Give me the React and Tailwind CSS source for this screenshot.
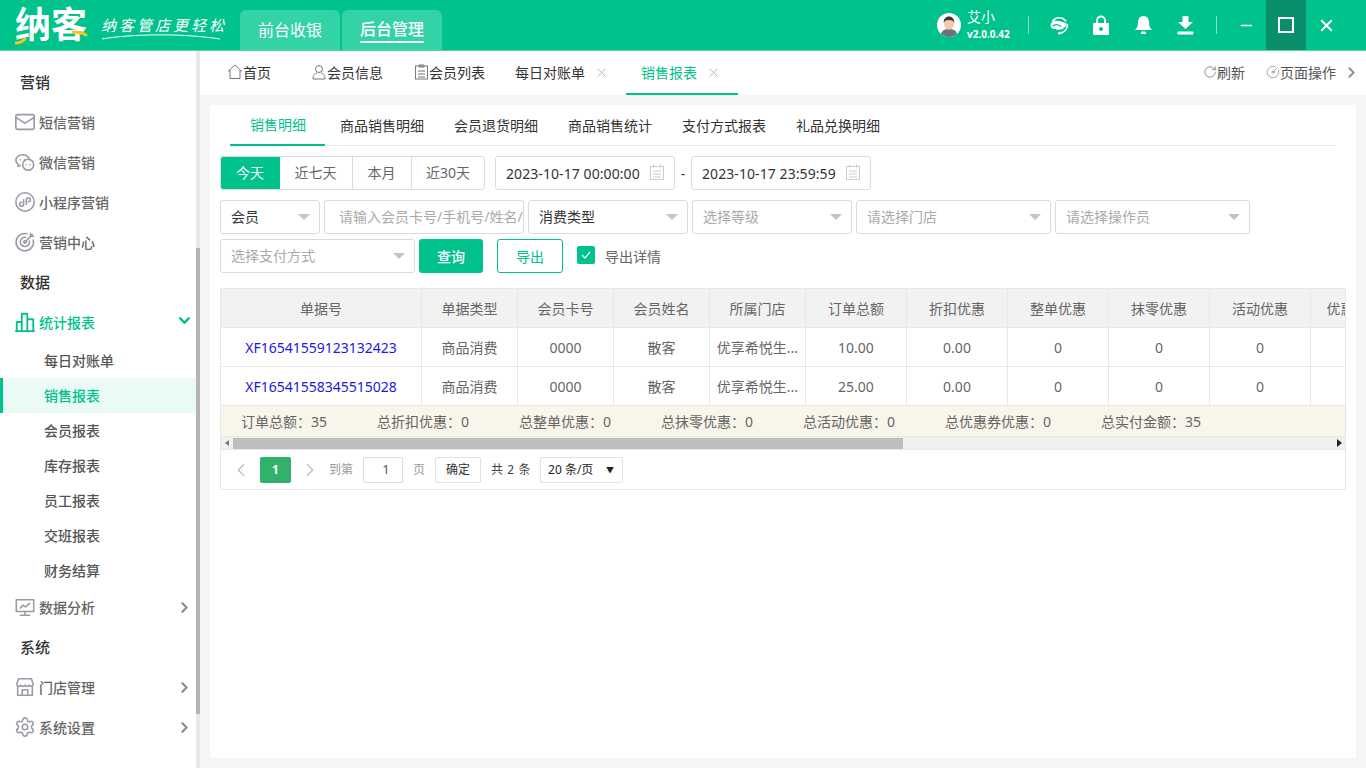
import React from "react";
import { Mail, ChevronDown, ChevronRight, ChevronLeft, X, Minus, Settings, RotateCw, CircleGauge } from "lucide-react";

const Ic = ({ children, s = 22, cls = "", vb = "0 0 24 24", sw = 1.7 }) => (
  <svg width={s} height={s} viewBox={vb} fill="none" stroke="currentColor" strokeWidth={sw} strokeLinecap="round" strokeLinejoin="round" className={`shrink-0 ${cls}`}>{children}</svg>
);

const icons = {
  mail: <Mail size={22} strokeWidth={1.8} className="shrink-0" />,
  wechat: (
    <Ic>
      <path d="M9.500 4C5.400 4 2 6.700 2 10c0 1.900 1.100 3.600 2.900 4.700L4.300 17l2.700-1.300" />
      <path d="M17 9.600C16.100 6.400 13.100 4 9.500 4" />
      <circle cx="15.500" cy="15" r="6" />
      <path d="M13.300 15h.01M17.600 15h.01" />
      <path d="M7 9.500h.01M11.500 9.500h.01" />
    </Ic>
  ),
  mini: (
    <Ic>
      <circle cx="12" cy="12" r="10" />
      <path d="M10.500 9.500v5a2.200 2.200 0 1 1-2.200-2.200M13.500 14.500v-5a2.200 2.200 0 1 1 2.200 2.200" />
    </Ic>
  ),
  target: (
    <Ic>
      <path d="M21 10a9.500 9.500 0 1 1-7-7" />
      <path d="M16.800 11a5 5 0 1 1-4-4" />
      <circle cx="12" cy="12" r="1.400" />
      <path d="M12 12l8-8M18 2.500v3.200h3.300" />
    </Ic>
  ),
  chart: (
    <Ic sw={2}>
      <path d="M3 22V12h5.500v10M8.500 22V3h6v19M14.500 22V9H21v13M2 22h20" />
    </Ic>
  ),
  monitor: (
    <Ic>
      <rect x="2.500" y="4" width="19" height="13" />
      <path d="M12 17v3.500M7 21h10M7 13l3-3 2.500 2L17 8" />
    </Ic>
  ),
  store: (
    <Ic>
      <path d="M5 3h14l2 6a2.400 2.400 0 0 1-4.500 1 2.600 2.600 0 0 1-4.500 0 2.600 2.600 0 0 1-4.500 0A2.400 2.400 0 0 1 3 9z" />
      <path d="M4 11v10h16V11M9 21v-6h6v6" />
    </Ic>
  ),
  gear: <Settings size={22} strokeWidth={1.7} className="shrink-0" />,
};

const Group = ({ t }) => (
  <div className="h-10 flex items-center pl-5 text-[15px] font-medium text-[#333]">{t}</div>
);

const Item = ({ icon, t, arrow, active }) => (
  <div className={`h-10 flex items-center pl-[15px] pr-[3px] text-[14px] font-medium ${active ? "text-[#00c28c]" : "text-[#666]"}`}>
    <span className={`w-5 h-5 flex items-center justify-center mr-1 ${active ? "text-[#00c28c]" : "text-[#9a9aa5]"}`}>{icons[icon]}</span>
    <span className="flex-1">{t}</span>
    {arrow === "down" && <ChevronDown size={17} strokeWidth={3.4} className="text-[#00c28c] -mt-1" />}
    {arrow === "right" && <ChevronRight size={17} strokeWidth={3} className="text-[#8b8b96]" />}
  </div>
);

const Sub = ({ t, active }) => (
  <div className={`h-[35px] flex items-center text-[14px] font-medium ${active ? "bg-[#e9fbf4] text-[#00c28c] border-l-[3px] border-[#00c28c] pl-[41px]" : "pl-[44px] text-[#555]"}`}>{t}</div>
);

function Sidebar() {
  return (
    <aside className="w-[200px] h-full shrink-0 flex bg-white overflow-hidden">
      <div className="w-[196px] pt-[11px]">
        <Group t="营销" />
        <Item icon="mail" t="短信营销" />
        <Item icon="wechat" t="微信营销" />
        <Item icon="mini" t="小程序营销" />
        <Item icon="target" t="营销中心" />
        <Group t="数据" />
        <Item icon="chart" t="统计报表" arrow="down" active />
        <div className="mt-[1px] mb-[-1px]">
          <Sub t="每日对账单" />
          <Sub t="销售报表" active />
          <Sub t="会员报表" />
          <Sub t="库存报表" />
          <Sub t="员工报表" />
          <Sub t="交班报表" />
          <Sub t="财务结算" />
        </div>
        <Item icon="monitor" t="数据分析" arrow="right" />
        <Group t="系统" />
        <Item icon="store" t="门店管理" arrow="right" />
        <Item icon="gear" t="系统设置" arrow="right" />
      </div>
      <div className="w-[4px] h-full bg-[#e8e8e8] pt-[197px]">
        <div className="h-[466px] bg-[#b4b4b4]" />
      </div>
    </aside>
  );
}

function Header() {
  return (
    <header className="h-[51px] shrink-0 bg-[#00c28c] border-b border-[#4fdc8f] flex items-stretch text-white">
      <div className="w-[240px] flex items-center pl-[15px] shrink-0">
        <div className="relative w-[74px] h-[40px] flex items-center">
          <span className="text-[36px] leading-none font-bold">纳客</span>
          <svg width="74" height="40" viewBox="0 0 74 40" fill="none" className="absolute left-0 top-0">
            <path d="M1 38c3 0 6-1 9-4" stroke="#f5c518" strokeWidth="3" strokeLinecap="round" />
            <path d="M58 27c3 0 8 0 13 3" stroke="#f5c518" strokeWidth="3" strokeLinecap="round" />
          </svg>
        </div>
        <div className="ml-[12px] w-[126px] mt-[6px]">
          <div className="text-[15px] leading-[18px] italic whitespace-nowrap tracking-[3px]">纳客管店更轻松</div>
          <svg width="120" height="6" viewBox="0 0 120 6" fill="none" className="block">
            <path d="M1 5C30 0 80 -1 119 5" stroke="#fff" strokeWidth="1" />
          </svg>
        </div>
      </div>
      <div className="flex items-end gap-[2px]">
        <div className="w-[100px] h-[40px] rounded-t-[6px] bg-[#33d3a7] flex items-center justify-center text-[16px]">前台收银</div>
        <div className="w-[100px] h-[40px] rounded-t-[6px] bg-[#33d3a7] flex items-center justify-center text-[16px] font-medium">
          <span className="border-b-2 border-white leading-[23px]">后台管理</span>
        </div>
      </div>
      <div className="flex-1" />
      <div className="flex items-center">
        <svg width="24" height="24" viewBox="0 0 24 24" className="mr-[6px]">
          <circle cx="12" cy="12" r="12" fill="#fff" />
          <path d="M4 21c1-4 4-5 8-5s7 1 8 5a12 12 0 0 1-16 0z" fill="#6d7280" />
          <ellipse cx="12" cy="11" rx="5" ry="5.800" fill="#f6c9a8" />
          <path d="M6.800 10c-.6-5 3-6.500 5.200-6.500S17.800 5 17.200 10c-1-2.400-2.500-3-5.200-3s-4.200.6-5.200 3z" fill="#3a3a3a" />
        </svg>
        <div className="w-[61px]">
          <div className="text-[14px] leading-[16px]">艾小</div>
          <div className="text-[10px] leading-[14px] font-bold mt-[2px]">v2.0.0.42</div>
        </div>
        <div className="w-px h-[18px] bg-white/50" />
        <div className="w-[20px]" />
        <span className="w-[20px] h-[22px] flex items-center justify-center mr-[22px]">
          <svg width="22" height="22" viewBox="0 0 24 24" fill="none" stroke="#fff" strokeLinecap="round">
            <path d="M4.500 7A10 10 0 0 1 20 7" strokeWidth="2" />
            <path d="M22 12a10 10 0 0 1-8 9.700" strokeWidth="2.200" />
            <path d="M2 13c0-3 2.500-6 5-6 4 0 8 1 13 2.500 1.500.5 1.500 2 .5 3-1 1.500-3 4.500-7.500 5C8 18 2 17 2 13z" fill="#fff" stroke="none" />
            <path d="M5 13c3-2 6-2 9 .5" stroke="#00c28c" strokeWidth="1.600" />
            <circle cx="12.500" cy="21.800" r="1.600" fill="#fff" stroke="none" />
          </svg>
        </span>
        <span className="w-[20px] flex justify-center mr-[22px]">
          <svg width="16" height="20" viewBox="0 0 16 20">
            <path d="M4 9V5.500a4 4 0 0 1 8 0V9" fill="none" stroke="#fff" strokeWidth="2" />
            <path fillRule="evenodd" d="M1 8h14a1 1 0 0 1 1 1v10a1 1 0 0 1-1 1H1a1 1 0 0 1-1-1V9a1 1 0 0 1 1-1zm7 4a2 2 0 1 0 0 4 2 2 0 0 0 0-4z" fill="#fff" />
          </svg>
        </span>
        <span className="w-[20px] flex justify-center mr-[22px]">
          <svg width="17" height="20" viewBox="0 0 17 20" fill="#fff">
            <path d="M8.500 1c3.500 0 5.500 2.800 5.500 6.500 0 4 1 5.500 3 7.500H0c2-2 3-3.500 3-7.500C3 3.800 5 1 8.500 1z" />
            <rect x="6" y="16.500" width="5" height="2.500" rx="1" />
          </svg>
        </span>
        <span className="w-[20px] flex justify-center mr-[21px]">
          <svg width="17" height="19" viewBox="0 0 17 19" fill="#fff">
            <path d="M5.500 0h6v6H16l-7.500 7L1 6h4.500z" />
            <rect x="0.500" y="15.500" width="16" height="3" rx="1" />
          </svg>
        </span>
        <div className="w-px h-[18px] bg-white/50" />
        <div className="w-[49px] h-full flex items-center justify-center pl-[9px]"><Minus size={17} strokeWidth={2.4} /></div>
        <div className="w-[40px] h-full bg-[#0a8f6c] flex items-center justify-center">
          <div className="w-[16px] h-[16px] border-2 border-white" />
        </div>
        <div className="w-[40px] h-full flex items-center justify-center"><X size={19} strokeWidth={2.4} /></div>
        <div className="w-[20px]" />
      </div>
    </header>
  );
}

function TopTab({ icon, t, close, active, cls = "" }) {
  return (
    <div className={`h-full flex items-center text-[14px] ${active ? "border-b-2 border-[#00c28c] text-[#00c28c]" : "text-[#333] pb-[2px]"} ${cls}`}>
      {icon}
      <span>{t}</span>
      {close && <X size={15} strokeWidth={1.3} className="text-[#aaa] ml-[9px] mr-[-1px]" />}
    </div>
  );
}

function TopTabs() {
  return (
    <div className="h-[44px] shrink-0 bg-white flex items-center pr-[6px]">
      <TopTab cls="ml-[27px]" t="首页" icon={<svg width="16" height="16" viewBox="0 0 16 16" fill="none" stroke="#777" strokeWidth="1"><path d="M1 7.500 8 1l7 6.500M3 6v8.500h10V6" /></svg>} />
      <TopTab cls="ml-[40px]" t="会员信息" icon={<svg width="16" height="16" viewBox="0 0 16 16" fill="none" stroke="#777" strokeWidth="1"><circle cx="8" cy="5" r="3.500" /><path d="M2 15c0-4 2-5.500 4-6M14 15c0-4-2-5.500-4-6M2 15h12" /></svg>} />
      <TopTab cls="ml-[31px]" t="会员列表" icon={<svg width="15" height="16" viewBox="0 0 15 16" fill="none" stroke="#777" strokeWidth="1"><rect x="1.500" y="2" width="12" height="13" /><path d="M5 1h5v2H5zM4 7h7M4 10h7M4 13h7" /></svg>} />
      <TopTab cls="ml-[30px]" t="每日对账单" close />
      <TopTab cls="ml-[18px] pl-[15px] pr-[18px]" t="销售报表" close active />
      <div className="flex-1" />
      <div className="flex items-center text-[14px] text-[#555] pb-[2px]">
        <RotateCw size={14} strokeWidth={1.2} className="text-[#666]" />
        <span>刷新</span>
        <CircleGauge size={14} strokeWidth={1.1} className="ml-[21px] text-[#777]" />
        <span>页面操作</span>
        <ChevronRight size={17} strokeWidth={2.8} className="ml-[7px] text-[#8f8f99]" />
      </div>
    </div>
  );
}

const Tri = ({ cls = "" }) => (
  <span className={`w-0 h-0 border-x-[6px] border-x-transparent border-t-[6px] border-t-[#c4c4c4] ${cls}`} />
);

const Sel = ({ t, w, ph }) => (
  <div className={`h-[34px] ${w} shrink-0 border border-[#dcdcdc] rounded-[3px] flex items-center justify-between pl-[10px] pr-[9px] text-[14px] ${ph ? "text-[#aaa]" : "text-[#333]"}`}>
    <span className="-mt-[2px]">{t}</span>
    <Tri />
  </div>
);

const DateBox = ({ t }) => (
  <div className="h-[34px] w-[180px] border border-[#dcdcdc] rounded-[3px] flex items-center pl-[10px] text-[14px] tracking-[0.08px] text-[#333]">
    <span className="flex-1 whitespace-nowrap">{t}</span>
    <svg width="16" height="16" viewBox="0 0 16 16" fill="none" stroke="#ccc" strokeWidth="1" className="mr-[9px] -mt-[2px]">
      <rect x="1.500" y="2.500" width="13" height="13" /><path d="M4.500 0.500v3M11.500 0.500v3M4 7h8M4 10h8M4 13h8" />
    </svg>
  </div>
);

const widths = [201, 96, 96, 96, 96, 101, 101, 101, 101, 101, 60];
const heads = ["单据号", "单据类型", "会员卡号", "会员姓名", "所属门店", "订单总额", "折扣优惠", "整单优惠", "抹零优惠", "活动优惠", "优惠"];
const rows = [
  ["XF16541559123132423", "商品消费", "0000", "散客", "优享希悦生...", "10.00", "0.00", "0", "0", "0", ""],
  ["XF16541558345515028", "商品消费", "0000", "散客", "优享希悦生...", "25.00", "0.00", "0", "0", "0", ""],
];

function DataTable() {
  return (
    <div className="mt-[15px] w-[1126px] h-[202px] border border-[#e8e8e8] flex flex-col overflow-hidden">
      <div className="overflow-hidden h-[117px] shrink-0">
        <table className="table-fixed border-separate border-spacing-0 w-[1150px] text-[14px] text-[#666]">
          <colgroup>{widths.map((w, i) => <col key={i} style={{ width: w }} />)}</colgroup>
          <thead>
            <tr className="h-[39px] bg-[#f2f2f2]">
              {heads.map((h, i) => <th key={i} className="font-normal border-r border-b border-[#e8e8e8] whitespace-nowrap overflow-hidden">{h}</th>)}
            </tr>
          </thead>
          <tbody>
            {rows.map((r, i) => (
              <tr key={i} className="h-[39px]">
                {r.map((c, j) => (
                  <td key={j} className={`border-r border-b border-[#e8e8e8] text-center whitespace-nowrap overflow-hidden ${j === 0 ? "text-[#1a1ae0]" : ""}`}>{c}</td>
                ))}
              </tr>
            ))}
          </tbody>
        </table>
      </div>
      <div className="h-[31px] shrink-0 bg-[#f8f5eb] border-b border-[#e8e8e8] flex items-center pl-[20px] text-[14px] text-[#666] whitespace-nowrap">
        <span className="w-[136px]">订单总额：35</span>
        <span className="w-[142px]">总折扣优惠：0</span>
        <span className="w-[142px]">总整单优惠：0</span>
        <span className="w-[142px]">总抹零优惠：0</span>
        <span className="w-[142px]">总活动优惠：0</span>
        <span className="w-[156px]">总优惠券优惠：0</span>
        <span>总实付金额：35</span>
      </div>
      <div className="h-[13px] shrink-0 bg-[#f0f0f0] border-b border-[#e8e8e8] flex items-center">
        <span className="w-[12px] flex justify-center"><span className="w-0 h-0 border-y-[3px] border-y-transparent border-r-[4px] border-r-[#777]" /></span>
        <div className="w-[670px] h-[11px] bg-[#bebebe]" />
        <div className="flex-1" />
        <span className="w-[12px] flex justify-center"><span className="w-0 h-0 border-y-[4px] border-y-transparent border-l-[5px] border-l-[#222]" /></span>
      </div>
      <div className="flex-1 flex items-center pl-[9px] text-[12px] text-[#999]">
        <ChevronLeft size={22} strokeWidth={1.2} className="text-[#bbb]" />
        <div className="ml-[8px] w-[31px] h-[26px] rounded-[2px] bg-[#30b26c] text-white flex items-center justify-center font-bold">1</div>
        <ChevronRight size={22} strokeWidth={1.2} className="ml-[8px] text-[#bbb]" />
        <span className="ml-[8px]">到第</span>
        <div className="ml-[10px] w-[40px] h-[26px] border border-[#dcdcdc] rounded-[2px] flex items-center justify-center text-[#555] text-[13px] pl-[6px]">1</div>
        <span className="ml-[10px]">页</span>
        <div className="ml-[10px] w-[46px] h-[26px] border border-[#e2e2e2] rounded-[2px] flex items-center justify-center text-[#333]">确定</div>
        <span className="ml-[10px] w-[39px] text-[#444] whitespace-nowrap tracking-[0.6px]">共 2 条</span>
        <div className="ml-[10px] w-[83px] h-[26px] border border-[#e2e2e2] rounded-[2px] flex items-center justify-between pl-[7px] pr-[8px] text-[#222]">
          <span>20 条/页</span>
          <span className="text-[8px] leading-none">▼</span>
        </div>
      </div>
    </div>
  );
}

function Panel() {
  const tabs = ["商品销售明细", "会员退货明细", "商品销售统计", "支付方式报表", "礼品兑换明细"];
  return (
    <div className="flex-1 mx-[10px] my-[10px] bg-white pl-[10px] overflow-hidden">
      <div className="ml-[10px] mr-[20px] h-[41px] border-b border-[#e8e8e8] flex text-[14px] text-[#333]">
        <div className="w-[95px] h-[41px] pl-5 border-b-2 border-[#00c28c] text-[#00c28c] flex items-center whitespace-nowrap">销售明细</div>
        {tabs.map((t) => <div key={t} className="px-[15px] h-full flex items-center whitespace-nowrap">{t}</div>)}
      </div>
      <div className="mt-[10px] flex items-center">
        <div className="h-[34px] w-[265px] border border-[#dcdcdc] rounded-[3px] flex text-[14px] text-[#666] overflow-hidden">
          <div className="w-[59px] bg-[#00c28c] text-white flex items-center justify-center pb-[1px] pr-[1px]">今天</div>
          <div className="w-[73px] border-r border-[#dcdcdc] flex items-center justify-center pb-[1px] pr-[1px]">近七天</div>
          <div className="w-[59px] border-r border-[#dcdcdc] flex items-center justify-center pb-[1px] pr-[1px]">本月</div>
          <div className="flex-1 flex items-center justify-center pb-[1px]">近30天</div>
        </div>
        <div className="ml-[10px]"><DateBox t="2023-10-17 00:00:00" /></div>
        <span className="w-[16px] text-center text-[14px] text-[#333]">-</span>
        <DateBox t="2023-10-17 23:59:59" />
      </div>
      <div className="mt-[10px] flex gap-[4px]">
        <Sel t="会员" w="w-[100px]" />
        <div className="h-[34px] w-[200px] shrink-0 border border-[#dcdcdc] rounded-[3px] flex items-center pl-[14px] pb-[2px] text-[14px] text-[#aaa] overflow-hidden whitespace-nowrap">请输入会员卡号/手机号/姓名/</div>
        <Sel t="消费类型" w="w-[160px]" />
        <Sel t="选择等级" w="w-[160px]" ph />
        <Sel t="请选择门店" w="w-[195px]" ph />
        <Sel t="请选择操作员" w="w-[195px]" ph />
      </div>
      <div className="mt-[5px] flex items-center">
        <Sel t="选择支付方式" w="w-[195px]" ph />
        <div className="ml-[4px] w-[64px] h-[34px] rounded-[3px] bg-[#00c28c] text-white text-[14px] font-medium flex items-center justify-center">查询</div>
        <div className="ml-[14px] w-[66px] h-[34px] rounded-[3px] border border-[#00c28c] text-[#00c28c] text-[14px] flex items-center justify-center">导出</div>
        <div className="ml-[14px] w-[18px] h-[18px] rounded-[2px] bg-[#00c28c] flex items-center justify-center -mt-[2px]">
          <svg width="12" height="12" viewBox="0 0 12 12" fill="none" stroke="#fff" strokeWidth="1.200"><path d="M2 6l3 3 5-6" /></svg>
        </div>
        <span className="ml-[10px] text-[14px] text-[#666]">导出详情</span>
      </div>
      <DataTable />
    </div>
  );
}

export default function App() {
  return (
    <div className="w-[1366px] h-[768px] flex flex-col overflow-hidden bg-[#f5f5f5] font-['Noto_Sans','Noto_Sans_CJK_SC',sans-serif]">
      <Header />
      <div className="flex-1 flex min-h-0">
        <Sidebar />
        <main className="flex-1 flex flex-col min-w-0">
          <TopTabs />
          <Panel />
        </main>
      </div>
    </div>
  );
}
